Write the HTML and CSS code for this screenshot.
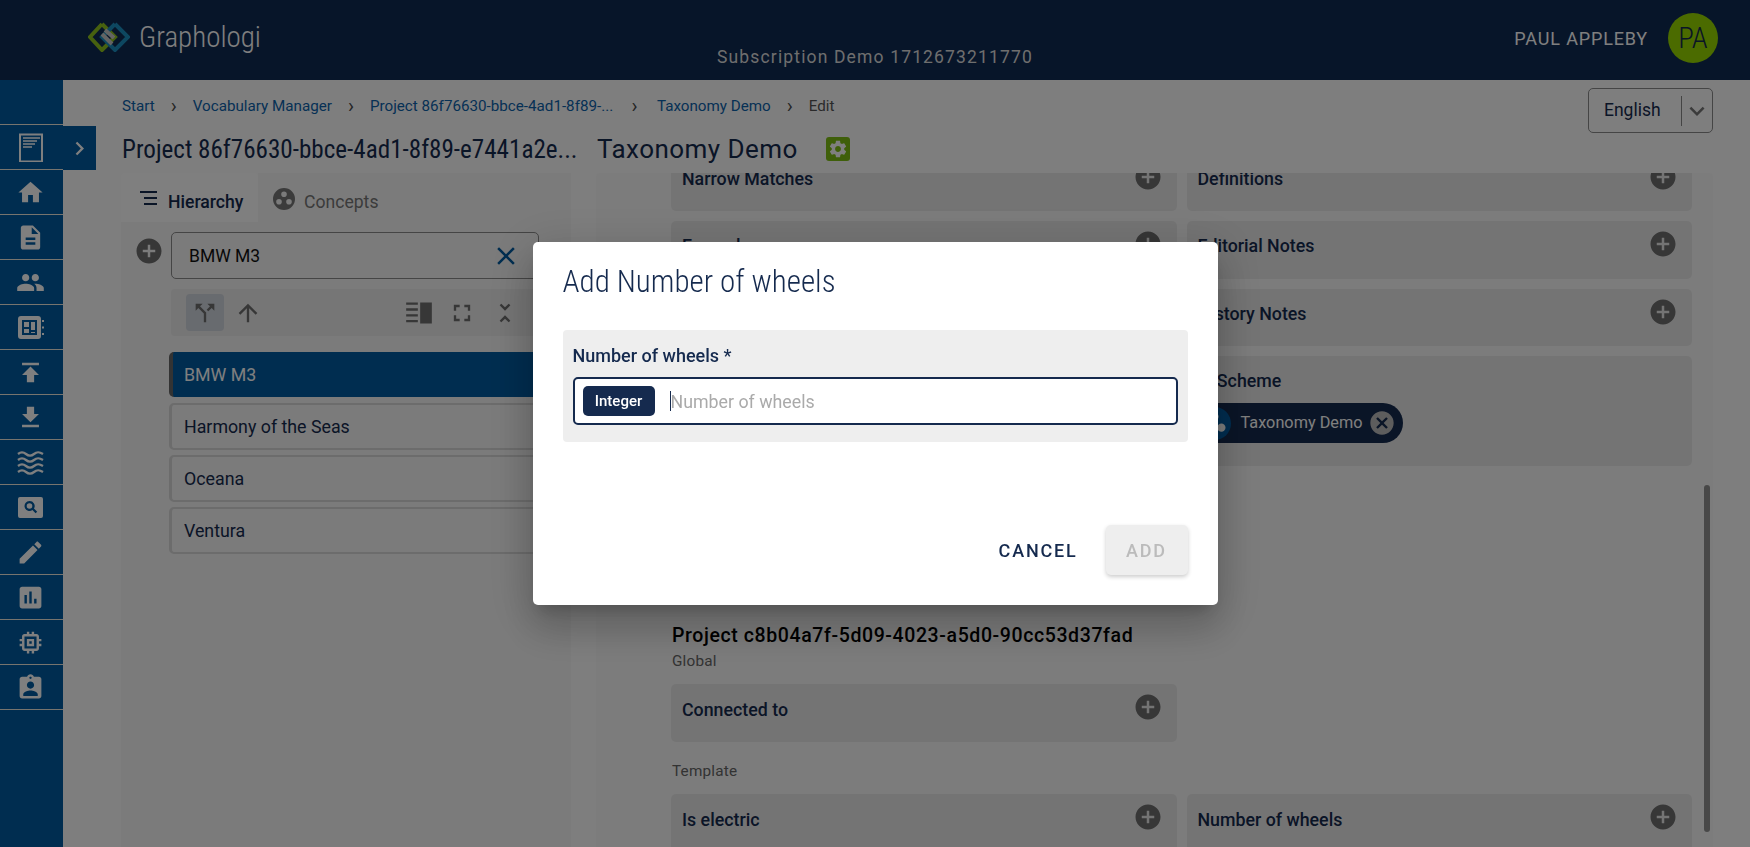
FILE: index.html
```html
<!DOCTYPE html>
<html lang="en">
<head>
<meta charset="utf-8">
<title>Graphologi</title>
<link rel="stylesheet" href="styles.css">
</head>
<body>
<header class="topbar">
  <div class="brand">
    <svg class="logo" viewBox="0 0 42 30">
      <path d="M14 2 27 15 14 28 2 15 14 2" fill="none" stroke="#8fc31f" stroke-width="4"/>
      <path d="M27 2 40 15 27 28 14 15 27 2" fill="none" stroke="#1b8fc0" stroke-width="4"/>
      <path d="M14 12 24 22M17 8l9 8" fill="none" stroke="#c9c9c9" stroke-width="4"/>
    </svg>
    <span class="brand-name">Graphologi</span>
  </div>
  <div class="subscription">Subscription Demo 1712673211770</div>
  <div class="user">
    <span class="user-name">PAUL APPLEBY</span>
    <span class="avatar">PA</span>
  </div>
</header>

<div class="main">
  <nav class="sidebar">
    <div class="side-spacer"></div>
    <a class="side-item"><svg class="side-icon" viewBox="0 0 29 29"><path d="M4 1.5h22v27H4z" fill="none" stroke="currentColor" stroke-width="2"/><path d="M7 5h17M7 8h14M7 11h12M7 14h9" fill="none" stroke="currentColor" stroke-width="1.4"/></svg></a>
    <a class="side-item"><svg class="side-icon" viewBox="0 0 24 24"><path d="M10 20v-6h4v6h5v-8h3L12 3 2 12h3v8z"/></svg></a>
    <a class="side-item"><svg class="side-icon" viewBox="0 0 24 24"><path d="M14 2H6c-1.1 0-1.99.9-1.99 2L4 20c0 1.1.89 2 1.99 2H18c1.1 0 2-.9 2-2V8l-6-6zm2 16H8v-2h8v2zm0-4H8v-2h8v2zm-3-5V3.5L18.500 9H13z"/></svg></a>
    <a class="side-item"><svg class="side-icon" viewBox="0 0 24 24"><path d="M16 11c1.660 0 2.990-1.340 2.990-3S17.660 5 16 5c-1.660 0-3 1.340-3 3s1.340 3 3 3zm-8 0c1.660 0 2.990-1.340 2.990-3S9.660 5 8 5C6.340 5 5 6.340 5 8s1.340 3 3 3zm0 2c-2.330 0-7 1.170-7 3.500V19h14v-2.500c0-2.330-4.670-3.500-7-3.500zm8 0c-.29 0-.62.02-.97.05 1.160.84 1.970 1.970 1.970 3.450V19h6v-2.500c0-2.330-4.670-3.500-7-3.500z"/></svg></a>
    <a class="side-item"><svg class="side-icon" viewBox="0 0 29 29"><path fill-rule="evenodd" d="M5 3h17a3 3 0 0 1 3 3v17a3 3 0 0 1-3 3H5a3 3 0 0 1-3-3V6a3 3 0 0 1 3-3zm1 4v15h15V7z"/><path d="M8 9h5v5H8zM15 9h4v8h-4zM8 16h5v4H8zM15 19h4v1h-4zM26 7h2v2h-2zM26 13.500h2v2h-2zM26 20h2v2h-2z"/></svg></a>
    <a class="side-item"><svg class="side-icon" viewBox="0 0 24 24"><path d="M5 4v2h14V4H5zm0 10h4v6h6v-6h4l-7-7-7 7z"/></svg></a>
    <a class="side-item"><svg class="side-icon" viewBox="0 0 24 24"><path d="M19 9h-4V3H9v6H5l7 7 7-7zM5 18v2h14v-2H5z"/></svg></a>
    <a class="side-item"><svg class="side-icon" viewBox="0 0 29 29"><path d="M2 6c3-2.500 5-2.500 8 0s5 2.500 8 0 5-2.500 9 0M2 12c3-2.500 5-2.500 8 0s5 2.500 8 0 5-2.500 9 0M2 18c3-2.500 5-2.500 8 0s5 2.500 8 0 5-2.500 9 0M2 24c3-2.500 5-2.500 8 0s5 2.500 8 0 5-2.500 9 0" fill="none" stroke="currentColor" stroke-width="2.300"/></svg></a>
    <a class="side-item"><svg class="side-icon" viewBox="0 0 29 29"><path fill-rule="evenodd" d="M4 4h21a2 2 0 0 1 2 2v17a2 2 0 0 1-2 2H4a2 2 0 0 1-2-2V6a2 2 0 0 1 2-2zm9.500 4a5 5 0 1 0 2.900 9.100l3.200 3.200 1.600-1.600-3.200-3.200A5 5 0 0 0 13.500 8zm0 2.200a2.800 2.800 0 1 1 0 5.600 2.800 2.800 0 0 1 0-5.600z"/></svg></a>
    <a class="side-item"><svg class="side-icon" viewBox="0 0 24 24"><path d="M3 17.250V21h3.750L17.810 9.940l-3.750-3.750L3 17.250zM20.710 7.040c.39-.39.39-1.020 0-1.410l-2.340-2.340c-.39-.39-1.020-.39-1.410 0l-1.830 1.830 3.750 3.750 1.830-1.830z"/></svg></a>
    <a class="side-item"><svg class="side-icon" viewBox="0 0 24 24"><path d="M19 3H5c-1.100 0-2 .9-2 2v14c0 1.100.9 2 2 2h14c1.100 0 2-.9 2-2V5c0-1.100-.9-2-2-2zM9 17H7v-7h2v7zm4 0h-2V7h2v10zm4 0h-2v-4h2v4z"/></svg></a>
    <a class="side-item"><svg class="side-icon" viewBox="0 0 24 24"><path d="M15 9H9v6h6V9zm-2 4h-2v-2h2v2zm8-2V9h-2V7c0-1.100-.9-2-2-2h-2V3h-2v2h-2V3H9v2H7c-1.100 0-2 .9-2 2v2H3v2h2v2H3v2h2v2c0 1.100.9 2 2 2h2v2h2v-2h2v2h2v-2h2c1.100 0 2-.9 2-2v-2h2v-2h-2v-2h2zm-4 6H7V7h10v10z"/></svg></a>
    <a class="side-item"><svg class="side-icon" viewBox="0 0 24 24"><path d="M19 3h-4.180C14.400 1.840 13.300 1 12 1c-1.300 0-2.400.84-2.820 2H5c-1.100 0-2 .9-2 2v14c0 1.100.9 2 2 2h14c1.100 0 2-.9 2-2V5c0-1.100-.9-2-2-2zm-7 0c.55 0 1 .45 1 1s-.45 1-1 1-1-.45-1-1 .45-1 1-1zm0 4c1.660 0 3 1.340 3 3s-1.340 3-3 3-3-1.340-3-3 1.340-3 3-3zm6 12H6v-1.400c0-2 4-3.100 6-3.100s6 1.100 6 3.100V19z"/></svg></a>
  </nav>
  <button class="side-toggle"><svg viewBox="0 0 24 24" class="toggle-icon"><path d="M8.600 16.590 13.170 12 8.600 7.410 10 6l6 6-6 6z"/></svg></button>

  <div class="content">
    <div class="page-head">
      <div class="head-left">
        <div class="crumbs">
          <a class="crumb">Start</a><span class="sep">›</span>
          <a class="crumb">Vocabulary Manager</a><span class="sep">›</span>
          <a class="crumb crumb-long">Project 86f76630-bbce-4ad1-8f89-...</a><span class="sep sep-long">›</span>
          <a class="crumb">Taxonomy Demo</a><span class="sep">›</span>
          <span class="crumb-current">Edit</span>
        </div>
        <div class="title-row">
          <h1 class="title title-project">Project 86f76630-bbce-4ad1-8f89-e7441a2e...</h1>
          <h1 class="title title-tax">Taxonomy Demo</h1>
          <span class="gear"><svg viewBox="0 0 24 24"><path d="M19.430 12.980c.04-.32.07-.64.07-.98s-.03-.66-.07-.98l2.110-1.650c.19-.15.24-.42.12-.64l-2-3.460c-.12-.22-.39-.3-.61-.22l-2.490 1c-.52-.4-1.080-.73-1.690-.98l-.38-2.650C14.460 2.180 14.250 2 14 2h-4c-.25 0-.46.18-.49.42l-.38 2.650c-.61.25-1.170.59-1.690.98l-2.490-1c-.23-.09-.49 0-.61.22l-2 3.460c-.13.22-.07.49.12.64l2.110 1.650c-.04.32-.07.65-.07.98s.03.66.07.98l-2.110 1.650c-.19.15-.24.42-.12.64l2 3.460c.12.22.39.3.61.22l2.490-1c.52.4 1.080.73 1.690.98l.38 2.650c.03.24.24.42.49.42h4c.25 0 .46-.18.49-.42l.38-2.650c.61-.25 1.170-.59 1.690-.98l2.490 1c.23.09.49 0 .61-.22l2-3.460c.12-.22.07-.49-.12-.64l-2.110-1.650zM12 15.500c-1.930 0-3.500-1.570-3.500-3.500s1.570-3.500 3.500-3.500 3.500 1.570 3.500 3.500-1.570 3.500-3.500 3.500z"/></svg></span>
        </div>
      </div>
      <div class="lang">
        <span class="lang-text">English</span>
        <span class="lang-arrow"><svg viewBox="0 0 24 24"><path d="M7.410 8.590 12 13.170l4.590-4.580L18 10l-6 6-6-6z"/></svg></span>
      </div>
    </div>

    <div class="panels">
      <section class="left-panel">
        <div class="tabs">
          <div class="tab tab-active">
            <svg class="tab-icon" viewBox="0 0 20 20"><path d="M1 3h17M5 9h13M5 15h13" fill="none" stroke="currentColor" stroke-width="2"/></svg>
            <span>Hierarchy</span>
          </div>
          <div class="tab">
            <svg class="tab-icon tab-icon-c" viewBox="0 0 24 24"><path fill-rule="evenodd" d="M12 1a11 11 0 1 1 0 22 11 11 0 0 1 0-22zm0 3.500a2.800 2.800 0 1 0 0 5.600 2.800 2.800 0 0 0 0-5.600zM7 12a2.800 2.800 0 1 0 0 5.600A2.800 2.800 0 0 0 7 12zm10 0a2.800 2.800 0 1 0 0 5.600 2.800 2.800 0 0 0 0-5.600z"/></svg>
            <span>Concepts</span>
          </div>
        </div>
        <div class="tree">
          <div class="search-row">
            <svg class="add-icon add-search" viewBox="0 0 24 24"><path d="M12 2C6.480 2 2 6.480 2 12s4.480 10 10 10 10-4.480 10-10S17.520 2 12 2zm5 11h-4v4h-2v-4H7v-2h4V7h2v4h4v2z"/></svg>
            <div class="search">
              <span>BMW M3</span>
              <svg class="search-x" viewBox="0 0 24 24"><path d="M19 6.410 17.590 5 12 10.590 6.410 5 5 6.410 10.590 12 5 17.590 6.410 19 12 13.410 17.590 19 19 17.590 13.410 12z"/></svg>
            </div>
          </div>
          <div class="toolbar">
            <span class="tool tool-active"><svg viewBox="0 0 24 24"><path d="M14 4l2.290 2.290-2.880 2.880 1.420 1.420 2.880-2.880L20 10V4zm-4 0H4v6l2.290-2.290 4.710 4.700V20h2v-8.410l-5.290-5.300z"/></svg></span>
            <span class="tool"><svg viewBox="0 0 24 24"><path d="M4 12l1.410 1.410L11 7.830V20h2V7.830l5.580 5.590L20 12l-8-8-8 8z"/></svg></span>
            <span class="tool-gap"></span>
            <span class="tool"><svg viewBox="0 0 24 24"><path d="M1 2h10v2H1zM1 7h10v2H1zM1 12h10v2H1zM1 17h10v2H1zM13 2h10v18H13z" transform="translate(0 1)"/></svg></span>
            <span class="tool"><svg viewBox="0 0 24 24"><path d="M7 14H5v5h5v-2H7v-3zm-2-4h2V7h3V5H5v5zm12 7h-3v2h5v-5h-2v3zM14 5v2h3v3h2V5h-5z"/></svg></span>
            <span class="tool"><svg viewBox="0 0 24 24"><path d="M7.410 18.590 8.830 20 12 16.830 15.170 20l1.410-1.410L12 14l-4.590 4.590zm9.180-13.180L15.170 4 12 7.170 8.830 4 7.410 5.410 12 10l4.590-4.590z"/></svg></span>
          </div>
          <ul class="nodes">
            <li class="node node-active">BMW M3</li>
            <li class="node">Harmony of the Seas</li>
            <li class="node">Oceana</li>
            <li class="node">Ventura</li>
          </ul>
        </div>
      </section>

      <section class="right-panel">
        <div class="detail">
          <div class="card-grid card-grid-top">
            <div class="card"><span>Narrow Matches</span><svg class="add-icon" viewBox="0 0 24 24"><path d="M12 2C6.480 2 2 6.480 2 12s4.480 10 10 10 10-4.480 10-10S17.520 2 12 2zm5 11h-4v4h-2v-4H7v-2h4V7h2v4h4v2z"/></svg></div>
            <div class="card"><span>Definitions</span><svg class="add-icon" viewBox="0 0 24 24"><path d="M12 2C6.480 2 2 6.480 2 12s4.480 10 10 10 10-4.480 10-10S17.520 2 12 2zm5 11h-4v4h-2v-4H7v-2h4V7h2v4h4v2z"/></svg></div>
            <div class="card"><span>Examples</span><svg class="add-icon" viewBox="0 0 24 24"><path d="M12 2C6.480 2 2 6.480 2 12s4.480 10 10 10 10-4.480 10-10S17.520 2 12 2zm5 11h-4v4h-2v-4H7v-2h4V7h2v4h4v2z"/></svg></div>
            <div class="card"><span>Editorial Notes</span><svg class="add-icon" viewBox="0 0 24 24"><path d="M12 2C6.480 2 2 6.480 2 12s4.480 10 10 10 10-4.480 10-10S17.520 2 12 2zm5 11h-4v4h-2v-4H7v-2h4V7h2v4h4v2z"/></svg></div>
            <div class="card"><span>Change Notes</span></div>
            <div class="card"><span>History Notes</span><svg class="add-icon" viewBox="0 0 24 24"><path d="M12 2C6.480 2 2 6.480 2 12s4.480 10 10 10 10-4.480 10-10S17.520 2 12 2zm5 11h-4v4h-2v-4H7v-2h4V7h2v4h4v2z"/></svg></div>
            <div></div>
            <div class="card card-tall">
              <span>In Scheme</span>
              <div class="chip">
                <svg class="chip-icon" viewBox="0 0 24 24"><circle cx="12" cy="12" r="12"/><circle class="chip-dot" cx="12" cy="7" r="3"/><circle class="chip-dot" cx="7" cy="15" r="3"/><circle class="chip-dot" cx="17" cy="15" r="3"/></svg>
                <span class="chip-text">Taxonomy Demo</span>
                <svg class="chip-x" viewBox="0 0 24 24"><path d="M12 2C6.470 2 2 6.470 2 12s4.470 10 10 10 10-4.470 10-10S17.530 2 12 2zm5 13.590L15.590 17 12 13.410 8.410 17 7 15.590 10.590 12 7 8.410 8.410 7 12 10.590 15.590 7 17 8.410 13.410 12 17 15.590z"/></svg>
              </div>
            </div>
          </div>

          <h2 class="project-name">Project c8b04a7f-5d09-4023-a5d0-90cc53d37fad</h2>
          <div class="group-label">Global</div>
          <div class="card-grid">
            <div class="card"><span>Connected to</span><svg class="add-icon" viewBox="0 0 24 24"><path d="M12 2C6.480 2 2 6.480 2 12s4.480 10 10 10 10-4.480 10-10S17.520 2 12 2zm5 11h-4v4h-2v-4H7v-2h4V7h2v4h4v2z"/></svg></div>
          </div>
          <div class="group-label group-label-2">Template</div>
          <div class="card-grid">
            <div class="card"><span>Is electric</span><svg class="add-icon" viewBox="0 0 24 24"><path d="M12 2C6.480 2 2 6.480 2 12s4.480 10 10 10 10-4.480 10-10S17.520 2 12 2zm5 11h-4v4h-2v-4H7v-2h4V7h2v4h4v2z"/></svg></div>
            <div class="card"><span>Number of wheels</span><svg class="add-icon" viewBox="0 0 24 24"><path d="M12 2C6.480 2 2 6.480 2 12s4.480 10 10 10 10-4.480 10-10S17.520 2 12 2zm5 11h-4v4h-2v-4H7v-2h4V7h2v4h4v2z"/></svg></div>
          </div>
        </div>
        <div class="scroll-thumb"></div>
      </section>
    </div>
  </div>
</div>

<div class="backdrop">
  <div class="dialog">
    <h2 class="dialog-title">Add Number of wheels</h2>
    <div class="field">
      <label class="field-label">Number of wheels *</label>
      <div class="field-input">
        <span class="type-chip">Integer</span>
        <span class="caret"></span>
        <span class="placeholder">Number of wheels</span>
      </div>
    </div>
    <div class="dialog-actions">
      <button class="btn-cancel">CANCEL</button>
      <button class="btn-add">ADD</button>
    </div>
  </div>
</div>
</body>
</html>
```
FILE: styles.css
```css
* { box-sizing: border-box; }
html, body { margin: 0; height: 100%; }
body {
  width: 1750px;
  height: 847px;
  overflow: hidden;
  display: flex;
  flex-direction: column;
  background: #fdfdfd;
  color: #152a4e;
  font-family: Roboto, "Liberation Sans", sans-serif;
  font-size: 16px;
}
h1, h2, ul { margin: 0; padding: 0; }
svg { display: block; fill: currentColor; }

/* top bar */
.topbar {
  position: relative;
  flex: 0 0 80px;
  display: flex;
  align-items: center;
  justify-content: space-between;
  padding: 0 32px 0 88px;
  background: #0f2a52;
  color: #fff;
}
.brand { display: flex; align-items: center; gap: 9px; padding-bottom: 6px; }
.logo { width: 42px; height: 30px; }
.brand-name {
  font-size: 29px;
  font-weight: 300;
  font-stretch: 75%;
  color: #fff;
}
.subscription {
  position: absolute;
  left: 717px;
  top: 46px;
  font-size: 17.500px;
  letter-spacing: 1.150px;
  color: #ddd;
  line-height: 22px;
}
.user { display: flex; align-items: center; gap: 20px; padding-bottom: 4px; }
.user-name { font-size: 18px; font-weight: 450; letter-spacing: .85px; color: #fff; }
.avatar {
  width: 50px;
  height: 50px;
  border-radius: 50%;
  background: #97d700;
  color: #152a4e;
  display: flex;
  align-items: center;
  justify-content: center;
  font-size: 29px;
  font-weight: 300;
  font-stretch: 75%;
}

/* layout */
.main { position: relative; flex: 1; display: flex; min-height: 0; }
.sidebar {
  flex: 0 0 63px;
  background: #005ba1;
  color: #fff;
  display: flex;
  flex-direction: column;
}
.side-spacer { flex: 0 0 45px; border-bottom: 1px solid #eee8dc; }
.side-item {
  flex: 0 0 45px;
  display: flex;
  align-items: center;
  justify-content: center;
  padding-right: 3px;
  border-bottom: 1px solid #eee8dc;
}
.side-icon { width: 29px; height: 29px; }
.side-toggle {
  position: absolute;
  left: 63px;
  top: 46px;
  width: 33px;
  height: 44px;
  padding: 0;
  border: 0;
  background: #005ba1;
  color: #fff;
  display: flex;
  align-items: center;
  justify-content: center;
}
.toggle-icon { width: 27px; height: 27px; }

.content {
  flex: 1;
  min-width: 0;
  display: flex;
  flex-direction: column;
  padding: 0 37px 0 58px;
}
.page-head { flex: 0 0 93px; display: flex; justify-content: space-between; align-items: flex-start; }
.head-left { min-width: 0; }
.crumbs { display: flex; align-items: center; height: 18px; margin: 17px 0 0 1px; font-size: 15.200px; color: #0c62ab; white-space: nowrap; }
.crumb-long { width: 242px; white-space: nowrap; }
.sep { width: 38px; text-align: center; color: #4b4b4b; font-size: 20px; line-height: 18px; }
.sep-long { width: 45px; }
.crumb-current { color: #555; }
.title-row { display: flex; align-items: center; margin: 14px 0 0 1px; height: 40px; }
.title {
  font-weight: 400;
  font-stretch: 75%;
  color: #152a4e;
  white-space: nowrap;
}
.title-project { width: 475px; font-size: 25.100px; }
.title-tax { width: 229px; font-size: 26px; font-stretch: 90%; letter-spacing: .450px; }
.gear {
  width: 24px;
  height: 24px;
  border-radius: 3px;
  background: #7fbf14;
  color: #fff;
  display: flex;
  align-items: center;
  justify-content: center;
}
.gear svg { width: 20px; height: 20px; }
.lang {
  width: 125px;
  height: 45px;
  margin-top: 8px;
  display: flex;
  align-items: center;
  border: 1px solid #8a8a8a;
  border-radius: 5px;
  color: #152a4e;
}
.lang-text { flex: 1; padding: 0 0 2px 15px; font-size: 17.500px; }
.lang-arrow { width: 31px; height: 30px; border-left: 1px solid #888; color: #777; display: flex; align-items: center; justify-content: center; }
.lang-arrow svg { width: 30px; height: 30px; flex: none; }

.panels { flex: 1; min-height: 0; display: flex; gap: 25px; }

/* left panel */
.left-panel { flex: 0 0 450px; display: flex; flex-direction: column; background: #f6f6f6; }
.tabs { flex: 0 0 49px; display: flex; background: #fdfdfd; }
.tab {
  flex: 1;
  display: flex;
  align-items: center;
  gap: 8px;
  padding-top: 8px;
  padding-left: 14px;
  background: #f6f6f6;
  font-size: 17.600px;
  color: #777;
}
.tab-active {
  flex: 0 0 137px;
  padding-left: 18px;
  gap: 9px;
  background: #ffffff;
  border-radius: 4px 4px 0 0;
  color: #152a4e;
  font-weight: 470;
}
.tab-icon { width: 20px; height: 20px; margin-top: -6px; }
.tab-icon-c { width: 24px; height: 24px; margin-top: -6px; color: #777; }
.tree { flex: 1; padding: 10px 32px 0 13px; }
.search-row { display: flex; align-items: flex-start; gap: 7px; }
.add-icon { width: 30px; height: 30px; color: #6e6e6e; flex: none; }
.add-search { margin-top: 4px; }
.search {
  flex: 1;
  height: 47px;
  border: 1px solid #8a8a8a;
  border-radius: 5px;
  display: flex;
  align-items: center;
  justify-content: space-between;
  padding: 0 17px 0 17px;
  font-size: 17.500px;
  color: #111;
}
.search-x { width: 30px; height: 30px; color: #005ba1; flex: none; }
.toolbar {
  margin: 10px 0 0 37px;
  height: 47px;
  display: flex;
  align-items: center;
  padding: 0 15px;
  background: #ececec;
  border-radius: 4px;
  gap: 5px;
  color: #6e6e6e;
}
.tool { width: 38px; height: 37px; display: flex; align-items: center; justify-content: center; border-radius: 4px; }
.tool svg { width: 28px; height: 28px; }
.tool-active { background: #d0d6de; }
.tool-gap { flex: 1; }
.nodes { list-style: none; margin: 16px 0 0 35px; display: flex; flex-direction: column; gap: 5px; }
.node {
  height: 47px;
  display: flex;
  align-items: center;
  padding-left: 12px;
  border: 2px solid #d8d8d8;
  border-left-width: 3px;
  border-radius: 5px;
  font-size: 17.800px;
  color: #152a4e;
}
.node-active {
  height: 45px;
  margin-bottom: 1px;
  padding-left: 11px;
  background: #005ba1;
  border: 0;
  border-left: 4px solid #666;
  color: #fff;
}

/* right panel */
.right-panel { position: relative; flex: 1; min-width: 0; background: #f9f9f9; overflow: hidden; border-radius: 4px 4px 0 0; }
.detail { padding: 0 21px 0 75px; margin-top: -19.500px; }
.card-grid { display: grid; grid-template-columns: 1fr 1fr; gap: 10px; }
.card {
  position: relative;
  height: 58px;
  padding: 13.500px 11px;
  background: #e9e9e9;
  border-radius: 5px;
  font-size: 17.800px;
  font-weight: 470;
  color: #152a4e;
  line-height: 24px;
}
.card-grid-top .card { height: 57.500px; padding-top: 13px; }
.card .add-icon { position: absolute; right: 14px; top: 8px; }
.card-grid-top .card.card-tall { height: 110px; }
.chip {
  position: absolute;
  left: 8px;
  top: 47px;
  width: 208px;
  height: 40px;
  border-radius: 20px;
  background: #152a4e;
  color: #fff;
  display: flex;
  align-items: center;
  padding: 0 7px 0 3px;
  font-weight: 400;
  font-size: 16.300px;
}
.chip-icon { width: 33px; height: 33px; color: #005ba1; flex: none; }
.chip-dot { fill: #fff; }
.chip-text { flex: 1; padding-left: 10px; white-space: nowrap; }
.chip-x { width: 28px; height: 28px; color: #bbb; flex: none; }
.project-name { margin-top: 158px; padding-left: 1px; font-size: 19.500px; line-height: 24px; font-weight: 480; color: #000; letter-spacing: .6px; }
.group-label { margin-top: 4px; margin-bottom: 14px; padding-left: 1px; font-size: 15.300px; line-height: 18px; color: #666; letter-spacing: .2px; }
.group-label-2 { margin-top: 20px; }
.scroll-thumb { position: absolute; right: 3px; top: 312px; width: 6px; height: 347px; border-radius: 3px; background: #909090; }

/* dialog */
.backdrop {
  position: fixed;
  inset: 0;
  background: rgba(0, 0, 0, .5);
  display: flex;
  align-items: center;
  justify-content: center;
}
.dialog {
  width: 685px;
  height: 363px;
  padding: 0 30px;
  background: #fff;
  border-radius: 5px;
  box-shadow: 0 11px 15px -7px rgba(0,0,0,.2), 0 24px 38px 3px rgba(0,0,0,.14), 0 9px 46px 8px rgba(0,0,0,.12);
  display: flex;
  flex-direction: column;
}
.dialog-title {
  margin-top: 22px;
  height: 36px;
  line-height: 36px;
  font-size: 31px;
  font-weight: 300;
  font-stretch: 75%;
  color: #152a4e;
}
.field {
  margin-top: 30px;
  height: 112px;
  padding: 15px 10px 0;
  background: #eee;
  border-radius: 4px;
}
.field-label { display: block; height: 32px; line-height: 22px; font-weight: 470; font-size: 18px; color: #152a4e; }
.field-input {
  height: 48px;
  border: 2px solid #152a4e;
  border-radius: 5px;
  background: #fff;
  display: flex;
  align-items: center;
  padding-left: 8px;
}
.type-chip {
  width: 72px;
  height: 30px;
  border-radius: 5px;
  background: #152a4e;
  color: #fff;
  font-size: 15px;
  font-weight: 500;
  display: flex;
  align-items: center;
  justify-content: center;
}
.caret { width: 1px; height: 20px; margin-left: 15px; background: #152a4e; }
.placeholder { color: #aaa; font-size: 17.800px; }
.dialog-actions { margin-top: auto; margin-bottom: 30px; display: flex; justify-content: flex-end; align-items: center; gap: 28px; }
.btn-cancel, .btn-add { font-family: Roboto, sans-serif; font-size: 18px; font-weight: 500; letter-spacing: 1.800px; border: 0; padding: 0; }
.btn-cancel { background: none; color: #152a4e; }
.btn-add { width: 82px; height: 50px; border-radius: 5px; background: #eee; color: #bbb; box-shadow: 0 2px 4px rgba(0,0,0,.2); }
```
